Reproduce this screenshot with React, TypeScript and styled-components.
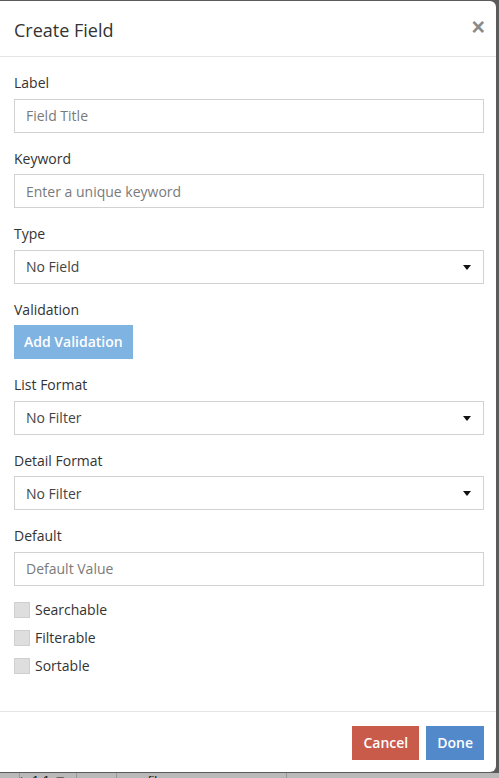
import React from "react";
import styled, { createGlobalStyle } from "styled-components";

const GlobalStyle = createGlobalStyle`
  html, body { margin: 0; padding: 0; }
  body {
    background: #5b5b5b;
    font-family: "Open Sans", "Noto Sans", Arial, sans-serif;
    color: #333;
    font-size: 14px;
    overflow: hidden;
  }
  * { box-sizing: border-box; }
`;

const Page = styled.div`
  width: 499px;
  height: 778px;
  padding-top: 1px;
  display: flex;
  flex-direction: column;
`;

const Modal = styled.div`
  width: 496px;
  background: #fff;
  border-radius: 0 6px 6px 0;
  display: flex;
  flex-direction: column;
`;

const Header = styled.div`
  display: flex;
  align-items: center;
  justify-content: space-between;
  padding: 15px 14px 14px 14px;
  border-bottom: 1px solid #e5e5e5;
`;

const Title = styled.h4`
  margin: 0;
  font-size: 18px;
  font-weight: 400;
  line-height: 26px;
  color: #333;
  position: relative;
  top: 1px;
`;

const Close = styled.button`
  border: 0;
  background: transparent;
  padding: 0;
  margin: -4px -3px 0 0;
  font-family: "Liberation Sans", Arial, sans-serif;
  font-size: 23px;
  font-weight: 700;
  line-height: 1;
  color: #8a8a8a;
  cursor: pointer;
`;

const Body = styled.div`
  padding: 15px 12px 34px 14px;
  display: flex;
  flex-direction: column;
`;

const Group = styled.div`
  display: flex;
  flex-direction: column;
  margin-bottom: 15px;
`;

const Label = styled.label`
  font-size: 14px;
  line-height: 21.5px;
  margin-bottom: 5px;
  color: #333;
`;

const Input = styled.input`
  height: 34px;
  width: 100%;
  border: 1px solid #d2d2d2;
  border-radius: 0;
  padding: 6px 11px;
  font-family: "Open Sans", Arial, sans-serif;
  font-size: 14px;
  color: #555;
  outline: none;
  &::placeholder { color: #7a7a7a; }
`;

const SelectBox = styled.div`
  height: 34px;
  width: 100%;
  border: 1px solid #d2d2d2;
  padding: 0 11px;
  display: flex;
  align-items: center;
  justify-content: space-between;
  font-size: 14px;
  color: #444;
`;

const Caret = styled.span`
  width: 0;
  height: 0;
  border-left: 4px solid transparent;
  border-right: 4px solid transparent;
  border-top: 5px solid #111;
  margin-right: 1px;
  margin-top: 1px;
`;

const Button = styled.button<{ $bg: string }>`
  height: 34px;
  border: 0;
  border-radius: 0;
  padding: 0 11px;
  background: ${(p) => p.$bg};
  color: #fff;
  font-family: "Open Sans", Arial, sans-serif;
  font-size: 14px;
  font-weight: 600;
  line-height: 20px;
  white-space: nowrap;
  cursor: pointer;
`;

const AddButton = styled(Button)`
  align-self: flex-start;
  padding: 0 10px;
`;

const Checks = styled.div`
  display: flex;
  flex-direction: column;
  gap: 6px;
  margin-top: -2px;
`;

const CheckRow = styled.label`
  display: flex;
  align-items: center;
  gap: 5px;
  line-height: 22px;
  font-size: 14px;
  color: #333;
`;

const Box = styled.span`
  width: 16px;
  height: 16px;
  background: #dedede;
  border: 1px solid #cfcfcf;
`;

const Footer = styled.div`
  border-top: 1px solid #e5e5e5;
  padding: 14px 12px 12px 14px;
  display: flex;
  justify-content: flex-end;
  gap: 7px;
`;

const Behind = styled.div`
  flex: 1;
  margin-top: 1px;
  background: #b9b9b9;
  display: flex;
  overflow: hidden;
  font-family: "Liberation Sans", Arial, sans-serif;
  font-size: 13px;
  color: #222;
`;

const BehindCell = styled.div<{ $w: number }>`
  width: ${(p) => p.$w}px;
  border-right: 1px solid #999;
  padding: 1px 0 0 12px;
  line-height: 14px;
`;

const fields: { label: string; kind: "input" | "select"; value: string }[] = [
  { label: "Label", kind: "input", value: "Field Title" },
  { label: "Keyword", kind: "input", value: "Enter a unique keyword" },
  { label: "Type", kind: "select", value: "No Field" },
];

const formats = [
  { label: "List Format", value: "No Filter" },
  { label: "Detail Format", value: "No Filter" },
];

export default function App() {
  return (
    <>
      <GlobalStyle />
      <Page>
        <Modal>
          <Header>
            <Title>Create Field</Title>
            <Close aria-label="Close">×</Close>
          </Header>
          <Body>
            {fields.map((f) => (
              <Group key={f.label}>
                <Label>{f.label}</Label>
                {f.kind === "input" ? (
                  <Input placeholder={f.value} />
                ) : (
                  <SelectBox>
                    {f.value}
                    <Caret />
                  </SelectBox>
                )}
              </Group>
            ))}
            <Group>
              <Label>Validation</Label>
              <AddButton $bg="#7fb3e2">Add Validation</AddButton>
            </Group>
            {formats.map((f) => (
              <Group key={f.label}>
                <Label>{f.label}</Label>
                <SelectBox>
                  {f.value}
                  <Caret />
                </SelectBox>
              </Group>
            ))}
            <Group>
              <Label>Default</Label>
              <Input placeholder="Default Value" />
            </Group>
            <Checks>
              {["Searchable", "Filterable", "Sortable"].map((c) => (
                <CheckRow key={c}>
                  <Box />
                  {c}
                </CheckRow>
              ))}
            </Checks>
          </Body>
          <Footer>
            <Button $bg="#c85b4a">Cancel</Button>
            <Button $bg="#5189cb">Done</Button>
          </Footer>
        </Modal>
        <Behind>
          <BehindCell $w={20}>◢</BehindCell>
          <BehindCell $w={57}>1:1 ▼</BehindCell>
          <BehindCell $w={40}>→</BehindCell>
          <BehindCell $w={170}>profile</BehindCell>
        </Behind>
      </Page>
    </>
  );
}
